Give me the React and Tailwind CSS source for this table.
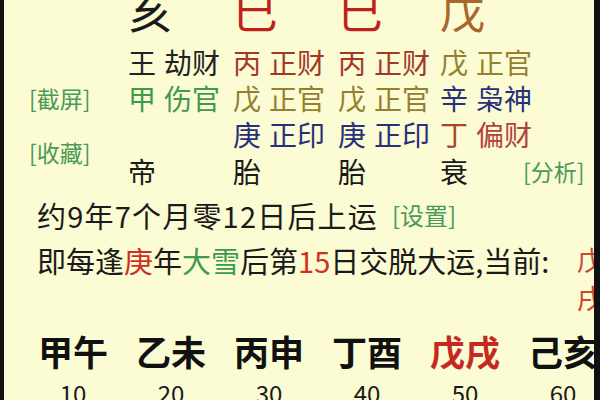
import React from "react";

const cols = [
  {
    top: { ch: "亥", cls: "text-[#1a1a1a]" },
    rows: [
      { g: "王", gc: "text-[#222]", s: "劫财", sc: "text-[#222]" },
      { g: "甲", gc: "text-[#3f9a4c]", s: "伤官", sc: "text-[#3f9a4c]" },
      null,
    ],
    stage: "帝",
    w: "w-[105px]",
  },
  {
    top: { ch: "巳", cls: "text-[#c0211c]" },
    rows: [
      { g: "丙", gc: "text-[#a03a28]", s: "正财", sc: "text-[#a03a28]" },
      { g: "戊", gc: "text-[#948030]", s: "正官", sc: "text-[#948030]" },
      { g: "庚", gc: "text-[#28307a]", s: "正印", sc: "text-[#28307a]" },
    ],
    stage: "胎",
    w: "w-[105px]",
  },
  {
    top: { ch: "巳", cls: "text-[#c0211c]" },
    rows: [
      { g: "丙", gc: "text-[#a03a28]", s: "正财", sc: "text-[#a03a28]" },
      { g: "戊", gc: "text-[#948030]", s: "正官", sc: "text-[#948030]" },
      { g: "庚", gc: "text-[#28307a]", s: "正印", sc: "text-[#28307a]" },
    ],
    stage: "胎",
    w: "w-[102px]",
  },
  {
    top: { ch: "戊", cls: "text-[#a8672c]" },
    rows: [
      { g: "戊", gc: "text-[#948030]", s: "正官", sc: "text-[#948030]" },
      { g: "辛", gc: "text-[#28307a]", s: "枭神", sc: "text-[#28307a]" },
      { g: "丁", gc: "text-[#a8482a]", s: "偏财", sc: "text-[#b0443a]" },
    ],
    stage: "衰",
    w: "w-[83px]",
  },
];

const dayun = [
  { gz: "甲午", age: 10 },
  { gz: "乙未", age: 20 },
  { gz: "丙申", age: 30 },
  { gz: "丁酉", age: 40 },
  { gz: "戊戌", age: 50, red: true },
  { gz: "己亥", age: 60 },
];

export default function App() {
  return (
    <div
      className="flex w-[600px] h-[400px] overflow-hidden bg-black"
      style={{ fontFamily: '"Noto Sans CJK SC", "Noto Sans", sans-serif' }}
    >
      <div className="w-[4px] shrink-0 bg-[#111]" />
      <div className="flex-1 overflow-hidden bg-[#fbfbd4] text-[#1a1a1a]">
        {/* pillar heads */}
        <div className="flex h-[36px] pl-[124px] -mt-[8px]">
          {cols.map((c, i) => (
            <div key={i} className={`${c.w} text-[45px] leading-[36px] ${c.top.cls}`}>
              {c.top.ch}
            </div>
          ))}
        </div>

        {/* hidden stems */}
        <div className="flex mt-[16px]">
          <div className="w-[124px] pl-[25px] pt-[36px] text-[23px] text-[#4a9a58]">
            <div className="h-[36px] leading-[36px]">[截屏]</div>
            <div className="h-[36px] leading-[36px] mt-[18px]">[收藏]</div>
          </div>
          {cols.map((c, i) => (
            <div key={i} className={`${c.w} text-[28px]`}>
              {c.rows.map((r, j) => (
                <div key={j} className="h-[36px] leading-[36px] whitespace-nowrap">
                  {r && (
                    <>
                      <span className={r.gc}>{r.g}</span>
                      <span className={`ml-[8px] ${r.sc}`}>{r.s}</span>
                    </>
                  )}
                </div>
              ))}
              <div className="h-[38px] leading-[38px]">{c.stage}</div>
            </div>
          ))}
          <div className="flex flex-col justify-end">
            <div className="h-[38px] leading-[38px] text-[23px] text-[#4a9a58] whitespace-nowrap">
              [分析]
            </div>
          </div>
        </div>

        {/* start of luck */}
        <div className="pl-[33px] mt-[7px] h-[36px] leading-[36px] text-[29px] tracking-[1.2px] whitespace-nowrap">
          约9年7个月零12日后上运
          <span className="ml-[14px] text-[24px] tracking-normal text-[#4a9a58] align-top">
            [设置]
          </span>
        </div>
        <div className="flex items-start w-[600px] pl-[33px] mt-[8px] text-[29px] whitespace-nowrap">
          <div className="flex-1 leading-[38px]">
            即每逢<span className="text-[#d0301e]">庚</span>年
            <span className="text-[#3f9a4c]">大雪</span>后第
            <span className="text-[#d0301e]">15</span>日交脱大运,当前:
          </div>
          <div className="w-[27px] whitespace-normal break-all leading-[38px] text-[27px] text-[#cc4630]">
            戊戌
          </div>
        </div>

        {/* great luck */}
        <div className="flex pl-[33px] mt-[14px]">
          {dayun.map((d) => (
            <div key={d.gz} className="w-[98px] shrink-0 flex flex-col items-start">
              <div
                className={`w-[72px] text-center text-[35px] leading-[40px] font-bold whitespace-nowrap ${
                  d.red ? "text-[#c42a22]" : "text-[#111]"
                }`}
              >
                {d.gz}
              </div>
              <div className="w-[72px] text-center mt-[6px] text-[24px] leading-[32px]">{d.age}</div>
            </div>
          ))}
        </div>
      </div>
      <div className="w-[6px] shrink-0 bg-[#111]" />
    </div>
  );
}
